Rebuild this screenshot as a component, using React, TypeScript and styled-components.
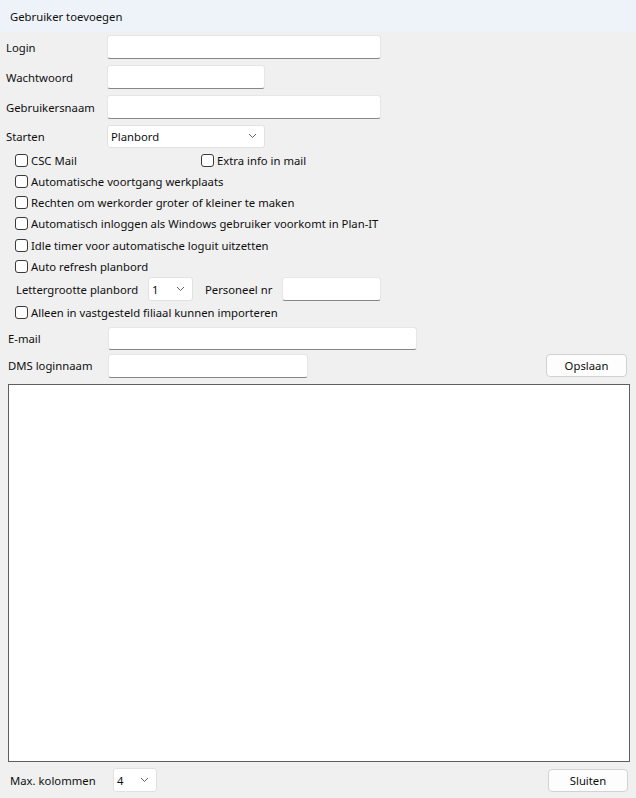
import React from "react"
import styled, { createGlobalStyle } from "styled-components"

const GlobalStyle = createGlobalStyle`
  html, body {
    margin: 0;
    padding: 0;
    background: #f0f0f0;
  }
  body {
    font-family: "Noto Sans", "Open Sans", sans-serif;
    font-size: 11.3px;
    color: #0f0f0f;
  }
`

const Window = styled.div`
  width: 636px;
  height: 798px;
  display: flex;
  flex-direction: column;
  background: #f0f0f0;
  overflow: hidden;
`

const TitleBar = styled.div`
  height: 32px;
  flex-shrink: 0;
  display: flex;
  align-items: center;
  padding-left: 10px;
  background: #eef3f9;
`

const Form = styled.div`
  display: flex;
  flex-direction: column;
`

const FieldRow = styled.div<{ $h?: number; $indent?: number }>`
  display: flex;
  align-items: center;
  height: ${(p) => p.$h ?? 30}px;
  padding-left: ${(p) => p.$indent ?? 6}px;
`

const Label = styled.span<{ $w: number; $gap?: number }>`
  width: ${(p) => p.$w}px;
  margin-left: ${(p) => p.$gap ?? 0}px;
  flex-shrink: 0;
  white-space: nowrap;
`

const TextBox = styled.div<{ $w: number; $h?: number }>`
  width: ${(p) => p.$w}px;
  height: ${(p) => p.$h ?? 24}px;
  box-sizing: border-box;
  background: #ffffff;
  border: 1px solid #e6e6e6;
  border-bottom-color: #878787;
  border-radius: 3px;
`

const ComboBox = styled.div<{ $w: number; $h?: number }>`
  width: ${(p) => p.$w}px;
  height: ${(p) => p.$h ?? 24}px;
  box-sizing: border-box;
  background: #ffffff;
  border: 1px solid #e1e1e1;
  border-radius: 3px;
  display: flex;
  align-items: center;
  justify-content: space-between;
  padding: 0 7px 0 3px;
`

const CheckRow = styled.label<{ $h?: number }>`
  display: flex;
  align-items: center;
  height: ${(p) => p.$h ?? 21.3}px;
  padding-left: 15px;
`

const Check = styled.span`
  width: 13px;
  height: 13px;
  box-sizing: border-box;
  border: 1px solid #3a3a3a;
  border-radius: 3px;
  background: #ffffff;
  margin-right: 3px;
  flex-shrink: 0;
`

const CheckItem = styled.span<{ $w?: number }>`
  display: flex;
  align-items: center;
  width: ${(p) => (p.$w ? `${p.$w}px` : "auto")};
`

const Button = styled.button<{ $w: number; $right?: number }>`
  width: ${(p) => p.$w}px;
  height: 23px;
  margin-right: ${(p) => p.$right ?? 0}px;
  box-sizing: border-box;
  background: #fdfdfd;
  border: 1px solid #d2d2d2;
  border-radius: 4px;
  font: inherit;
  color: #0f0f0f;
  padding: 0;
`

const Spacer = styled.div`
  flex: 1;
`

const ListArea = styled.div`
  margin: 6px 6px 0 8px;
  height: 378px;
  box-sizing: border-box;
  background: #ffffff;
  border: 1px solid #5f5f5f;
`

const BottomBar = styled.div`
  display: flex;
  align-items: center;
  height: 36px;
  padding: 0 8px 0 10px;
`

const Chevron = () => (
  <svg width="9" height="6" viewBox="0 0 9 6">
    <path d="M1 1 L4.5 4.5 L8 1" fill="none" stroke="#606060" strokeWidth="1" />
  </svg>
)

const Select = ({ value, w, h }: { value: string; w: number; h?: number }) => (
  <ComboBox $w={w} $h={h}>
    <span>{value}</span>
    <Chevron />
  </ComboBox>
)

const CheckBox = ({ label, w }: { label: string; w?: number }) => (
  <CheckItem $w={w}>
    <Check />
    {label}
  </CheckItem>
)

export default function App() {
  return (
    <>
      <GlobalStyle />
      <Window>
        <TitleBar>Gebruiker toevoegen</TitleBar>
        <Form>
          <FieldRow>
            <Label $w={101}>Login</Label>
            <TextBox $w={274} />
          </FieldRow>
          <FieldRow>
            <Label $w={101}>Wachtwoord</Label>
            <TextBox $w={158} />
          </FieldRow>
          <FieldRow>
            <Label $w={101}>Gebruikersnaam</Label>
            <TextBox $w={274} />
          </FieldRow>
          <FieldRow $h={28}>
            <Label $w={101}>Starten</Label>
            <Select value="Planbord" w={158} h={23} />
          </FieldRow>
          <CheckRow $h={20.5}>
            <CheckBox label="CSC Mail" w={186} />
            <CheckBox label="Extra info in mail" />
          </CheckRow>
          <CheckRow>
            <CheckBox label="Automatische voortgang werkplaats" />
          </CheckRow>
          <CheckRow>
            <CheckBox label="Rechten om werkorder groter of kleiner te maken" />
          </CheckRow>
          <CheckRow>
            <CheckBox label="Automatisch inloggen als Windows gebruiker voorkomt in Plan-IT" />
          </CheckRow>
          <CheckRow>
            <CheckBox label="Idle timer voor automatische loguit uitzetten" />
          </CheckRow>
          <CheckRow>
            <CheckBox label="Auto refresh planbord" />
          </CheckRow>
          <FieldRow $h={25} $indent={16}>
            <Label $w={132}>Lettergrootte planbord</Label>
            <Select value="1" w={45} />
            <Label $w={77} $gap={12}>Personeel nr</Label>
            <TextBox $w={99} />
          </FieldRow>
          <CheckRow $h={21.5}>
            <CheckBox label="Alleen in vastgesteld filiaal kunnen importeren" />
          </CheckRow>
          <FieldRow $indent={8}>
            <Label $w={100}>E-mail</Label>
            <TextBox $w={309} $h={23} />
          </FieldRow>
          <FieldRow $h={25} $indent={8}>
            <Label $w={100}>DMS loginnaam</Label>
            <TextBox $w={200} $h={24} />
            <Spacer />
            <Button $w={81} $right={9}>Opslaan</Button>
          </FieldRow>
        </Form>
        <ListArea />
        <BottomBar>
          <Label $w={103}>Max. kolommen</Label>
          <Select value="4" w={44} />
          <Spacer />
          <Button $w={80}>Sluiten</Button>
        </BottomBar>
      </Window>
    </>
  )
}
